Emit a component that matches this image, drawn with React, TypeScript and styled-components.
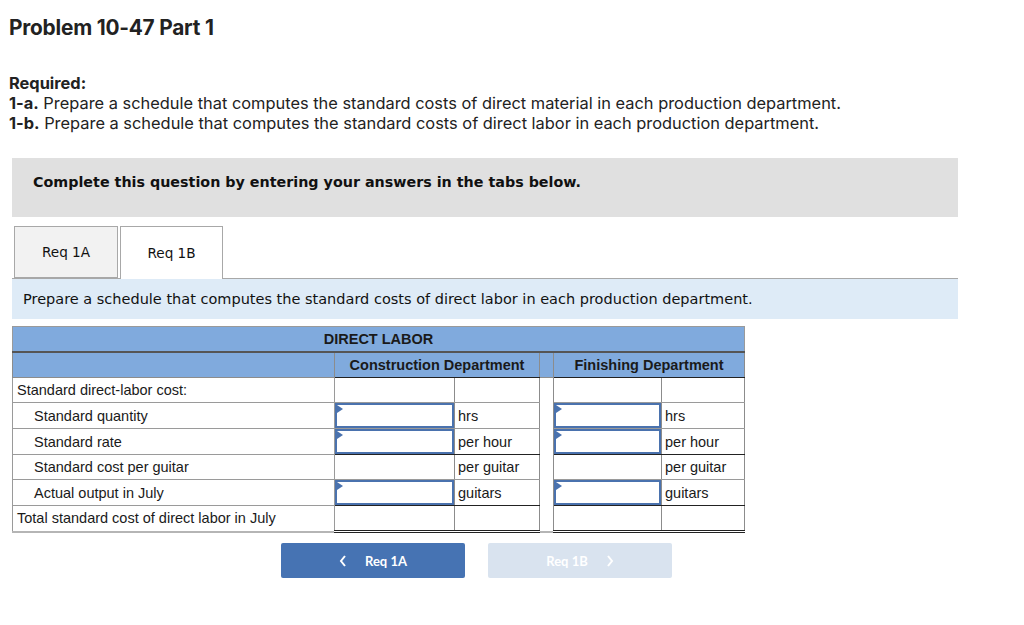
import React from "react";
import styled, { createGlobalStyle } from "styled-components";

const Global = createGlobalStyle`
  html, body { margin: 0; padding: 0; background: #fff; }
  body { font-family: "Inter", "Liberation Sans", sans-serif; color: #1a1a1a; }
`;

const Page = styled.div`
  width: 1024px;
  height: 625px;
  padding: 16px 66px 0 9px;
  box-sizing: border-box;
  display: flex;
  flex-direction: column;
`;

const Title = styled.h1`
  margin: 0;
  font-family: "Inter", sans-serif;
  font-weight: 700;
  font-size: 20.8px;
  line-height: 24px;
  letter-spacing: -0.2px;
  color: #222;
`;

const Required = styled.div`
  margin-top: 33px;
  font-family: "Inter", sans-serif;
  font-size: 16.4px;
  line-height: 20px;
  color: #222;
  p { margin: 0; }
  b { font-weight: 700; }
`;

const Panel = styled.div`
  margin-left: 3px;
  display: flex;
  flex-direction: column;
`;

const Notice = styled.div`
  margin-top: 25px;
  height: 59px;
  background: #e0e0e0;
  padding: 16px 0 0 21px;
  box-sizing: border-box;
  font-family: "DejaVu Sans", Verdana, sans-serif;
  font-weight: 700;
  font-size: 14.3px;
  color: #111;
`;

const TabBar = styled.div`
  margin-top: 9px;
  display: flex;
  gap: 2px;
  padding-left: 2px;
  border-bottom: 1px solid #a8a8a8;
  height: 52px;
`;

const Tab = styled.div<{ $active?: boolean }>`
  width: ${(p) => (p.$active ? 103 : 104)}px;
  height: ${(p) => (p.$active ? 53 : 52)}px;
  box-sizing: border-box;
  border: 1px solid #a8a8a8;
  border-bottom: ${(p) => (p.$active ? "none" : "1px solid #a8a8a8")};
  background: ${(p) => (p.$active ? "#fff" : "#f2f2f2")};
  display: flex;
  align-items: center;
  justify-content: center;
  font-family: "DejaVu Sans", Verdana, sans-serif;
  font-size: 13.6px;
  color: #111;
  position: relative;
  z-index: 1;
`;

const Instruction = styled.div`
  height: 40px;
  background: #deebf7;
  padding-left: 11px;
  display: flex;
  align-items: center;
  font-family: "DejaVu Sans", Verdana, sans-serif;
  font-size: 14.5px;
  color: #111;
`;

const Table = styled.table`
  margin-top: 7px;
  border-collapse: collapse;
  table-layout: fixed;
  width: 732px;
  font-family: "Liberation Sans", Arial, sans-serif;
  font-size: 14.5px;
  color: #1a1a1a;
  border: 1px solid #9a9a9a;
  border-bottom: 2px solid #b5b5b5;
`;

const TitleCell = styled.th`
  background: #80aadd;
  height: 24px;
  padding: 0;
  text-align: center;
  font-weight: 700;
  font-size: 14.5px;
  color: #1a1a1a;
  border-bottom: 2px solid #555;
`;

const DeptCell = styled.th<{ $gap?: boolean }>`
  background: #80aadd;
  height: 24px;
  padding: 0;
  text-align: center;
  font-weight: 700;
  font-size: 14.5px;
  color: #1a1a1a;
  border-left: 1px solid #8c8c8c;
  border-right: 1px solid #8c8c8c;
  border-bottom: 1px solid ${(p) => (p.$gap ? "#8c8c8c" : "#222")};
`;

const LabelCell = styled.td<{ $indent?: boolean }>`
  height: 24px;
  padding: 0 0 0 ${(p) => (p.$indent ? 21 : 4)}px;
  border: 1px solid #9a9a9a;
  white-space: nowrap;
  vertical-align: middle;
`;

const ValueCell = styled.td<{ $line?: "gray" | "dark" | "double" }>`
  height: 24px;
  padding: 0;
  border-left: 1px solid #8c8c8c;
  border-right: 1px solid #8c8c8c;
  border-bottom: ${(p) =>
    p.$line === "dark"
      ? "1px solid #222"
      : p.$line === "double"
      ? "3px double #222"
      : "1px solid #9a9a9a"};
  vertical-align: middle;
`;

const UnitCell = styled(ValueCell)`
  padding-left: 3px;
  white-space: nowrap;
`;

const GapCell = styled.td`
  padding: 0;
  border-left: 1px solid #8c8c8c;
  border-right: 1px solid #8c8c8c;
  border-bottom: none;
`;

const InputWrap = styled.div`
  position: relative;
  height: 25px;
  box-sizing: border-box;
  border: 2px solid #4a72ae;
  background: #fff;
  &::before {
    content: "";
    position: absolute;
    left: 0;
    top: 0;
    border-top: 4px solid transparent;
    border-bottom: 4px solid transparent;
    border-left: 6px solid #4a72ae;
  }
`;

const Nav = styled.div`
  margin-top: 10px;
  margin-left: 269px;
  display: flex;
  gap: 23px;
`;

const NavButton = styled.button<{ $disabled?: boolean }>`
  width: 184px;
  height: 35px;
  border: none;
  border-radius: 2px;
  background: ${(p) => (p.$disabled ? "#d9e3ef" : "#4673b3")};
  color: #fff;
  font-family: "Lato", sans-serif;
  font-weight: 700;
  font-size: 13px;
  display: flex;
  align-items: center;
  justify-content: center;
  gap: 18px;
  padding: 0;
  cursor: pointer;
`;

const Chevron = ({ dir }: { dir: "left" | "right" }) => (
  <svg width="8" height="12" viewBox="0 0 8 12">
    <path
      d={dir === "left" ? "M6 1 L2 6 L6 11" : "M2 1 L6 6 L2 11"}
      fill="none"
      stroke="#fff"
      strokeWidth="2"
    />
  </svg>
);

type Row = {
  label: string;
  indent?: boolean;
  input?: boolean;
  unit?: string;
  line?: "gray" | "dark" | "double";
};

const rows: Row[] = [
  { label: "Standard direct-labor cost:" },
  { label: "Standard quantity", indent: true, input: true, unit: "hrs" },
  { label: "Standard rate", indent: true, input: true, unit: "per hour", line: "dark" },
  { label: "Standard cost per guitar", indent: true, unit: "per guitar" },
  { label: "Actual output in July", indent: true, input: true, unit: "guitars", line: "dark" },
  { label: "Total standard cost of direct labor in July", line: "double" },
];

export default function App() {
  return (
    <>
      <Global />
      <Page>
        <Title>Problem 10-47 Part 1</Title>
        <Required>
          <p><b>Required:</b></p>
          <p><b>1-a.</b> Prepare a schedule that computes the standard costs of direct material in each production department.</p>
          <p><b>1-b.</b> Prepare a schedule that computes the standard costs of direct labor in each production department.</p>
        </Required>
        <Panel>
          <Notice>Complete this question by entering your answers in the tabs below.</Notice>
          <TabBar>
            <Tab>Req 1A</Tab>
            <Tab $active>Req 1B</Tab>
          </TabBar>
          <Instruction>
            Prepare a schedule that computes the standard costs of direct labor in each production department.
          </Instruction>
          <Table>
            <colgroup>
              <col style={{ width: 322 }} />
              <col style={{ width: 120 }} />
              <col style={{ width: 85 }} />
              <col style={{ width: 14 }} />
              <col style={{ width: 108 }} />
              <col style={{ width: 83 }} />
            </colgroup>
            <thead>
              <tr>
                <TitleCell colSpan={6}>DIRECT LABOR</TitleCell>
              </tr>
              <tr>
                <DeptCell $gap />
                <DeptCell colSpan={2}>Construction Department</DeptCell>
                <DeptCell $gap />
                <DeptCell colSpan={2}>Finishing Department</DeptCell>
              </tr>
            </thead>
            <tbody>
              {rows.map((r) => (
                <tr key={r.label}>
                  <LabelCell $indent={r.indent}>{r.label}</LabelCell>
                  <ValueCell $line={r.line}>{r.input && <InputWrap />}</ValueCell>
                  <UnitCell $line={r.line}>{r.unit}</UnitCell>
                  <GapCell />
                  <ValueCell $line={r.line}>{r.input && <InputWrap />}</ValueCell>
                  <UnitCell $line={r.line}>{r.unit}</UnitCell>
                </tr>
              ))}
            </tbody>
          </Table>
          <Nav>
            <NavButton>
              <Chevron dir="left" />
              <span>Req 1A</span>
            </NavButton>
            <NavButton $disabled>
              <span>Req 1B</span>
              <Chevron dir="right" />
            </NavButton>
          </Nav>
        </Panel>
      </Page>
    </>
  );
}
